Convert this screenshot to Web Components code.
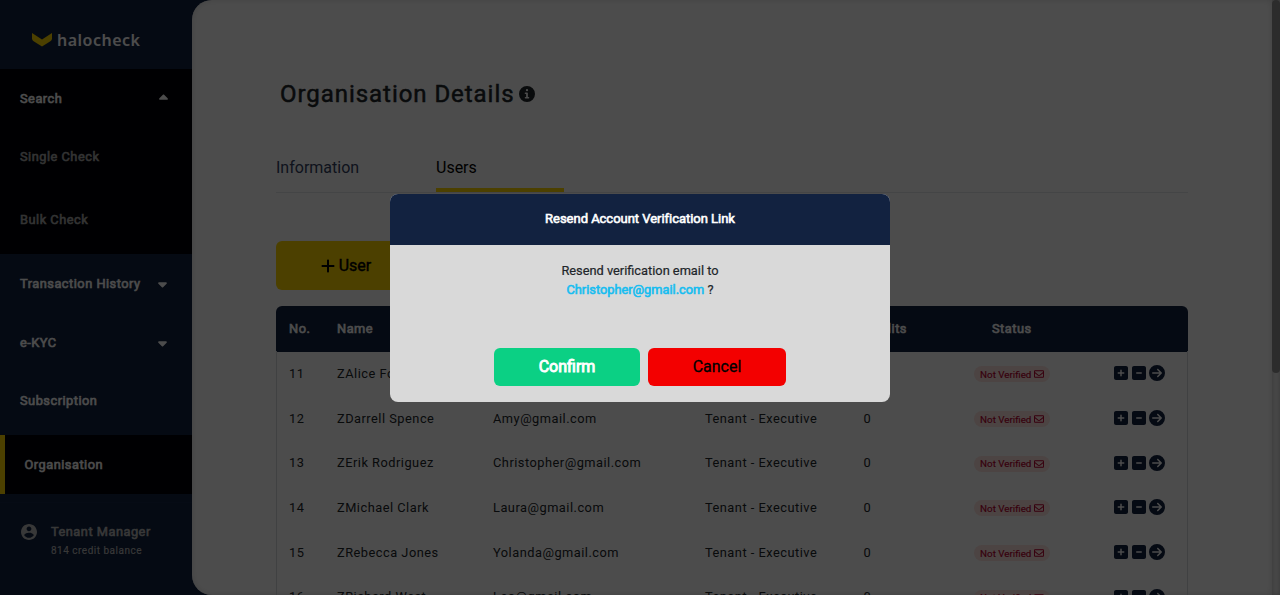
<!DOCTYPE html>
<html lang="en">
<head>
<meta charset="utf-8">
<title>halocheck - Organisation Details</title>
<style>
html,body{margin:0;height:100%;overflow:hidden}
body{font-family:Roboto,"Liberation Sans",sans-serif;color:#212529}
</style>
</head>
<body>
<hc-app></hc-app>
<script>
const define = (name, html, init) => customElements.define(name, class extends HTMLElement {
  constructor() {
    super();
    const t = document.createElement('template');
    t.innerHTML = html;
    this.attachShadow({mode: 'open'}).append(t.content.cloneNode(true));
  }
  connectedCallback() { if (init) init.call(this, this.shadowRoot); }
});

const ICONS = {
  up: ['0 0 320 512', 'M182.600 137.400c-12.500-12.500-32.800-12.500-45.300 0l-128 128c-9.200 9.200-11.900 22.900-6.900 34.900s16.600 19.800 29.600 19.800H288c12.900 0 24.600-7.800 29.600-19.800s2.200-25.700-6.900-34.900l-128-128z'],
  down: ['0 0 320 512', 'M137.400 374.600c12.500 12.500 32.800 12.500 45.300 0l128-128c9.200-9.200 11.900-22.900 6.900-34.900s-16.600-19.800-29.600-19.800H32c-12.900 0-24.600 7.800-29.600 19.800s-2.200 25.700 6.900 34.900l128 128z'],
  info: ['0 0 512 512', 'M256 512A256 256 0 1 0 256 0a256 256 0 1 0 0 512zM208 352h20V256H208c-18 0-28-8-28-24s10-24 28-24h50c16 0 26 10 26 24v120h20c16 0 26 10 26 24s-10 24-26 24H208c-16 0-26-10-26-24s10-24 26-24zm48-256a36 36 0 1 1 0 72 36 36 0 1 1 0-72z'],
  plus: ['0 0 448 512', 'M256 80c0-17.700-14.300-32-32-32s-32 14.300-32 32V224H48c-17.700 0-32 14.300-32 32s14.300 32 32 32H192V432c0 17.700 14.300 32 32 32s32-14.300 32-32V288H400c17.700 0 32-14.300 32-32s-14.300-32-32-32H256V80z'],
  add: ['0 32 448 448', 'M64 32C28.700 32 0 60.700 0 96V416c0 35.300 28.700 64 64 64H384c35.300 0 64-28.700 64-64V96c0-35.300-28.700-64-64-64H64zM200 344V280H136c-13.300 0-24-10.700-24-24s10.700-24 24-24h64V168c0-13.300 10.700-24 24-24s24 10.700 24 24v64h64c13.300 0 24 10.700 24 24s-10.700 24-24 24H248v64c0 13.300-10.700 24-24 24s-24-10.700-24-24z'],
  minus: ['0 32 448 448', 'M64 32C28.700 32 0 60.700 0 96V416c0 35.300 28.700 64 64 64H384c35.300 0 64-28.700 64-64V96c0-35.300-28.700-64-64-64H64zm88 200H296c13.300 0 24 10.700 24 24s-10.700 24-24 24H152c-13.300 0-24-10.700-24-24s10.700-24 24-24z'],
  go: ['0 0 512 512', 'M0 256a256 256 0 1 0 512 0A256 256 0 1 0 0 256zM297 385c-9.400 9.400-24.600 9.400-33.900 0s-9.400-24.600 0-33.900l71-71L120 280c-13.300 0-24-10.700-24-24s10.700-24 24-24l214.100 0-71-71c-9.400-9.400-9.400-24.600 0-33.900s24.600-9.400 33.900 0L409 239c9.400 9.400 9.400 24.600 0 33.900L297 385z'],
  mail: ['0 64 512 384', 'M64 112c-8.800 0-16 7.200-16 16v22.100L220.500 291.700c20.700 17 50.400 17 71.100 0L464 150.100V128c0-8.800-7.200-16-16-16H64zM48 212.200V384c0 8.800 7.200 16 16 16H448c8.800 0 16-7.200 16-16V212.200L322 328.800c-38.400 31.500-93.700 31.500-132 0L48 212.200zM0 128C0 92.700 28.700 64 64 64H448c35.300 0 64 28.700 64 64V384c0 35.300-28.700 64-64 64H64c-35.300 0-64-28.700-64-64V128z'],
  user: ['2 2 20 20', 'M12 2C6.480 2 2 6.480 2 12s4.480 10 10 10 10-4.480 10-10S17.520 2 12 2zm0 3c1.660 0 3 1.340 3 3s-1.340 3-3 3-3-1.340-3-3 1.340-3 3-3zm0 14.200c-2.500 0-4.710-1.280-6-3.220.030-1.990 4-3.080 6-3.080 1.990 0 5.970 1.090 6 3.080-1.290 1.940-3.500 3.220-6 3.220z'],
  logo: ['0 0 20 14', 'M0 0L10 6.500 20 0V6Q19.500 7.500 18 8.500L10 13.500 2 8.500Q.5 7.500 0 6z']
};
define('hc-icon', `<style>:host{display:inline-flex;width:var(--w,16px);height:var(--h,16px);flex:none}svg{width:100%;height:100%;display:block;fill:currentColor;stroke:none}</style><svg><path fill-rule="evenodd"/></svg>`, function (r) {
  const [box, d] = ICONS[this.getAttribute('name')];
  r.querySelector('svg').setAttribute('viewBox', box);
  r.querySelector('path').setAttribute('d', d);
});

define('hc-nav-item', `<style>
:host{display:flex;align-items:center;box-sizing:border-box;height:var(--row,59px);padding:0 25.500px 0 20px;color:#fff;font-size:12.800px;-webkit-text-stroke:.6px;letter-spacing:.5px}
:host([sub]){color:#aaa}
:host([active]){background:#000207;border-left:5px solid #fed700;padding-left:19.500px}
.t{flex:1}</style><span class="t"><slot></slot></span><slot name="caret"></slot>`);

define('hc-sidebar', `<style>
:host{display:flex;flex-direction:column;width:192px;height:595px;background:#122240;flex:none}
.logo{display:flex;align-items:center;height:69px;box-sizing:border-box;padding:11px 0 0 32px;gap:5px;color:#fff;font:600 16px "Noto Sans",sans-serif;letter-spacing:.5px}
.logo hc-icon{--w:20px;--h:14px;color:#fed700}
.open{background:#000207;height:185px}
hc-icon[slot]{--w:9px;--h:14px}
hc-icon[name=up]{margin-right:-1px}
.foot{margin-top:8px;border-top:1px solid #162648;display:flex;padding:20px 0 0 21px;gap:14px;color:#bbb}
.foot hc-icon{--w:16px;--h:16px;margin-top:1px}
.who{font-size:12.800px;-webkit-text-stroke:.6px;letter-spacing:.5px;line-height:18px}
.bal{font-size:10px;line-height:20px;letter-spacing:.5px;-webkit-text-stroke:.15px}
</style>
<div class="logo"><hc-icon name="logo"></hc-icon><span>halocheck</span></div>
<div class="open"><hc-nav-item style="--row:58px">Search<hc-icon slot="caret" name="up"></hc-icon></hc-nav-item>
<hc-nav-item sub style="--row:58px">Single Check</hc-nav-item><hc-nav-item sub style="--row:69px">Bulk Check</hc-nav-item></div>
<hc-nav-item>Transaction History<hc-icon slot="caret" name="down"></hc-icon></hc-nav-item>
<hc-nav-item>e-KYC<hc-icon slot="caret" name="down"></hc-icon></hc-nav-item>
<hc-nav-item style="--row:57px;margin-bottom:6px">Subscription</hc-nav-item>
<hc-nav-item active>Organisation</hc-nav-item>
<div class="foot"><hc-icon name="user"></hc-icon><div><div class="who">Tenant Manager</div><div class="bal">814 credit balance</div></div></div>`);

define('hc-tabs', `<style>
:host{display:flex;height:49px;box-sizing:border-box;border-bottom:1px solid #e4e7ea;font-size:16px}
span{width:128px;margin-right:32px;box-sizing:border-box;height:48px;line-height:48px;color:#33415f;font-weight:400}
.on{color:#000;border-bottom:4px solid #fed700}
</style><span>Information</span><span class="on">Users</span>`);

define('hc-row', `<style>
:host{display:grid;grid-template-columns:48px 156px 212px 158.600px 76px 1fr;align-items:center;height:44.700px;padding-left:13px;font-size:12.800px;letter-spacing:.5px;box-sizing:border-box}
.end{display:flex;align-items:center}
.st{margin-left:34.400px;width:76px;height:16px;border-radius:8px;background:#ffe3df;color:#b8002f;font-size:9.800px;-webkit-text-stroke:.15px;letter-spacing:0;display:flex;align-items:center;justify-content:center;gap:2.500px;margin-top:2px}
.st hc-icon{--w:10px;--h:8px}
.ac{display:flex;align-items:center;gap:4px;margin-left:64px;color:#122240}
.ac hc-icon{--w:14px;--h:14px}.ac hc-icon:last-child{--w:16px;--h:16px;margin-left:-1px}
</style><span id="a"></span><span id="b"></span><span id="c"></span><span>Tenant - Executive</span><span>0</span>
<span class="end"><span class="st">Not Verified<hc-icon name="mail"></hc-icon></span><span class="ac"><hc-icon name="add"></hc-icon><hc-icon name="minus"></hc-icon><hc-icon name="go"></hc-icon></span></span>`, function (r) {
  for (const k of ['a', 'b', 'c']) r.getElementById(k).textContent = this.getAttribute(k);
});

define('hc-table', `<style>
:host{display:block;width:912px}
.head{display:grid;grid-template-columns:48px 156px 212px 158px 129px 1fr;align-items:center;height:46px;box-sizing:border-box;padding:0 0 2px 13px;background:#122240;color:#fff;border-radius:6px 6px 0 0;font-size:12.800px;-webkit-text-stroke:.6px;letter-spacing:.5px}
.body{border:1px solid #d5d9dd;border-top:0}
.body hc-row{margin-left:-1px}
.body hc-row:first-child{margin-top:-1px}
</style><div class="head"><span>No.</span><span>Name</span><span>Email</span><span>Role</span><span>Credits</span><span>Status</span></div>
<div class="body"><hc-row a="11" b="ZAlice Ford" c="Alice@gmail.com"></hc-row>
<hc-row a="12" b="ZDarrell Spence" c="Amy@gmail.com"></hc-row>
<hc-row a="13" b="ZErik Rodriguez" c="Christopher@gmail.com"></hc-row>
<hc-row a="14" b="ZMichael Clark" c="Laura@gmail.com"></hc-row>
<hc-row a="15" b="ZRebecca Jones" c="Yolanda@gmail.com"></hc-row>
<hc-row a="16" b="ZRichard West" c="Leo@gmail.com"></hc-row></div>`);

define('hc-main', `<style>
:host{display:block;flex:1;box-sizing:border-box;height:595px;overflow:hidden;background:#fff;border-radius:20px 0 0 20px;padding:77px 0 0 84px;box-shadow:inset 0 0 6px #ddd}
h1{display:flex;align-items:center;gap:4px;margin:0 0 0 4px;height:34px;font-size:24px;font-weight:400;-webkit-text-stroke:.5px;letter-spacing:.95px}
h1 hc-icon{--w:16px;--h:16px}
hc-tabs{width:912px;margin-top:33px}
.add{display:flex;align-items:center;justify-content:center;gap:4px;width:140px;height:49px;box-sizing:border-box;margin:48px 0 16px;border-radius:6px;background:#fed700;color:#000;font-size:16px;-webkit-text-stroke:.4px}
.add hc-icon{--w:14px;--h:16px}
</style><h1><span>Organisation Details</span><hc-icon name="info"></hc-icon></h1><hc-tabs></hc-tabs>
<div class="add"><hc-icon name="plus"></hc-icon>User</div><hc-table></hc-table>`);

define('hc-scrollbar', `<style>:host{display:block;width:8px;height:595px;background:#f0f0f0;box-shadow:inset 0 0 5px #bbb;flex:none}
div{height:373px;background:#949494;border-radius:4px}</style><div></div>`);

define('hc-dialog', `<style>
:host{display:flex;flex-direction:column;position:absolute;left:390px;top:194px;width:500px;height:208px;border-radius:8px;overflow:hidden;background:#d9d9d9;text-align:center}
header{height:51px;line-height:50px;background:#122240;color:#fff;font-size:13px;-webkit-text-stroke:.6px;letter-spacing:-.03px}
p{margin:16px 0 0;font-size:12.800px;line-height:19px;height:87px;color:#212529;-webkit-text-stroke:.2px}
.btns{display:flex;justify-content:center;gap:8px}
.btns span{height:38px;line-height:37px;border-radius:6px;font-size:16px}
.ok{width:146px;background:#0bd084;color:#fff;-webkit-text-stroke:.9px}
.no{width:138px;background:#f30000;color:#000;-webkit-text-stroke:.3px}
</style><header><slot name="title"></slot></header><p><slot></slot></p><div class="btns"><span class="ok">Confirm</span><span class="no">Cancel</span></div>`);

define('hc-app', `<style>
:host{display:flex;position:relative;width:1280px;height:595px;overflow:hidden;background:#122240}
.shade{position:absolute;inset:0;background:rgba(0,0,0,.7)}
.mail{color:#17bdf0;-webkit-text-stroke:.6px}
</style><hc-sidebar></hc-sidebar><hc-main></hc-main><hc-scrollbar></hc-scrollbar><div class="shade"></div>
<hc-dialog><span slot="title">Resend Account Verification Link</span>Resend verification email to<br><span class="mail">Christopher@gmail.com</span> ?</hc-dialog>`);
</script>
</body>
</html>
